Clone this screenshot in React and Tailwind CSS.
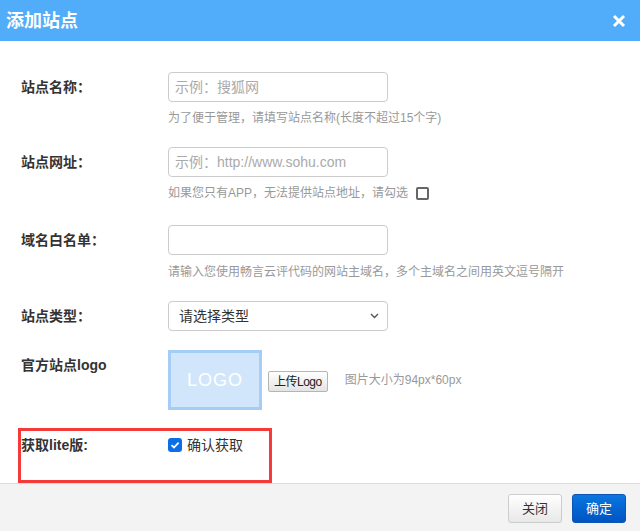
import React from "react";

const font = { fontFamily: '"Liberation Sans","Noto Sans CJK SC",sans-serif' };

function Label({ children, className = "" }) {
  return (
    <div className={"w-[147px] shrink-0 h-[30px] flex items-center text-[14px] font-bold text-[#333] " + className}>
      {children}
    </div>
  );
}

function TextInput({ placeholder }) {
  return (
    <div className="w-[220px] h-[30px] border border-[#ccc] rounded-[4px] flex items-center px-[6px] text-[14px] text-[#aaa] leading-none">
      {placeholder}
    </div>
  );
}

function Help({ children, className = "" }) {
  return <div className={"text-[12px] leading-[18px] text-[#999] " + className}>{children}</div>;
}

export default function App() {
  return (
    <div className="w-[640px] h-[531px] bg-white flex flex-col overflow-hidden" style={font}>
      <div className="h-[41px] bg-[#51adf9] flex items-center justify-between pl-[6px] pr-[14px] shrink-0">
        <div className="text-white text-[18px] font-bold leading-none">添加站点</div>
        <svg width="14" height="14" viewBox="0 0 14 14">
          <path d="M2 2 L12 12 M12 2 L2 12" stroke="white" strokeWidth="3" strokeLinecap="butt" />
        </svg>
      </div>

      <div className="flex-1 flex flex-col pl-[21px]">
        {/* row 1 */}
        <div className="flex mt-[31px]">
          <Label>站点名称：</Label>
          <div>
            <TextInput placeholder="示例：搜狐网" />
            <Help className="mt-[7px]">为了便于管理，请填写站点名称(长度不超过15个字)</Help>
          </div>
        </div>

        {/* row 2 */}
        <div className="flex mt-[20px]">
          <Label>站点网址：</Label>
          <div>
            <TextInput placeholder="示例：http://www.sohu.com" />
            <Help className="mt-[7px] flex items-center">
              如果您只有APP，无法提供站点地址，请勾选
              <span className="ml-[8px] w-[13px] h-[13px] border-2 border-[#666] rounded-[2px] inline-block"></span>
            </Help>
          </div>
        </div>

        {/* row 3 */}
        <div className="flex mt-[23px]">
          <Label>域名白名单：</Label>
          <div>
            <TextInput placeholder="" />
            <Help className="mt-[8px]">请输入您使用畅言云评代码的网站主域名，多个主域名之间用英文逗号隔开</Help>
          </div>
        </div>

        {/* row 4 */}
        <div className="flex mt-[20px]">
          <Label>站点类型：</Label>
          <div className="w-[220px] h-[30px] border border-[#ccc] rounded-[4px] flex items-center justify-between pl-[10px] pr-[8px] text-[14px] text-[#333] leading-none">
            <span>请选择类型</span>
            <svg width="9" height="6" viewBox="0 0 9 6">
              <path d="M1 1 L4.5 4.5 L8 1" fill="none" stroke="#555" strokeWidth="1.4" />
            </svg>
          </div>
        </div>

        {/* row 5 */}
        <div className="flex mt-[19px]">
          <div className="w-[147px] shrink-0 pt-[6px] text-[14px] leading-[18px] font-bold text-[#333]">官方站点logo</div>
          <div className="w-[94px] h-[60px] border-[3px] border-[#a6cdf6] bg-[#d2e6fb] flex items-center justify-center text-white text-[18px] leading-none tracking-[1px]">
            LOGO
          </div>
          <div className="ml-[6px] mt-[21px] h-[21px] px-[5px] border border-[#b5b5b5] rounded-[2px] bg-gradient-to-b from-white to-[#e4e4e4] flex items-center text-[12px] text-[#222] leading-none tracking-[-0.5px]">
            上传Logo
          </div>
          <div className="ml-[17px] mt-[21px] text-[12px] leading-[18px] text-[#999]">图片大小为94px*60px</div>
        </div>

        {/* red box */}
        <div className="mt-[18px] -ml-[3px] w-[254px] h-[55px] border-[3px] border-[#f53a3a] flex items-start pt-[5px]">
          <div className="w-[147px] shrink-0 text-[14px] leading-[18px] font-bold text-[#333]">获取lite版:</div>
          <div className="flex items-center h-[18px]">
            <span className="w-[14px] h-[14px] rounded-[3px] bg-[#0b6ee8] flex items-center justify-center">
              <svg width="10" height="10" viewBox="0 0 10 10">
                <path d="M1.5 5.2 L4 7.5 L8.6 2.6" fill="none" stroke="white" strokeWidth="1.8" />
              </svg>
            </span>
            <span className="ml-[5px] text-[14px] text-[#333] leading-none">确认获取</span>
          </div>
        </div>
      </div>

      <div className="h-[50px] shrink-0 border-t border-[#ddd] bg-[#f3f3f3] flex items-center justify-end pr-[14px] gap-[10px]">
        <div className="w-[54px] h-[29px] border border-[#ccc] rounded-[3px] bg-gradient-to-b from-white to-[#e8e8e8] flex items-center justify-center text-[13px] text-[#333] leading-none">
          关闭
        </div>
        <div className="w-[54px] h-[29px] rounded-[3px] bg-gradient-to-b from-[#0c76e0] to-[#0054c2] border border-[#0a55b5] flex items-center justify-center text-[13px] text-white leading-none">
          确定
        </div>
      </div>
    </div>
  );
}
